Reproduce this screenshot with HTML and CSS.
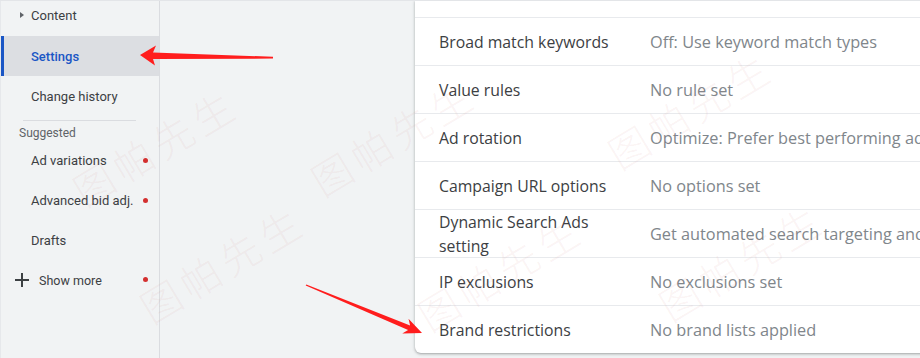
FILE: index.html
```html
<!DOCTYPE html>
<html>
<head>
<meta charset="utf-8">
<link rel="stylesheet" href="styles.css">
</head>
<body>
<div class="page">
  <nav class="sidebar">
    <div class="nav-item nav-first"><span class="caret"></span><span class="nav-text">Content</span></div>
    <div class="nav-item selected"><span class="nav-text">Settings</span></div>
    <div class="nav-item"><span class="nav-text">Change history</span></div>
    <div class="divider"></div>
    <div class="section-title">Suggested</div>
    <div class="nav-item"><span class="nav-text">Ad variations</span><span class="dot"></span></div>
    <div class="nav-item"><span class="nav-text">Advanced bid adj.</span><span class="dot"></span></div>
    <div class="nav-item"><span class="nav-text">Drafts</span></div>
    <div class="nav-item show-more">
      <svg class="plus" width="16" height="16" viewBox="0 0 16 16"><path d="M8 1v14M1 8h14" stroke="#3c4043" stroke-width="2" fill="none"/></svg>
      <span class="nav-text">Show more</span><span class="dot"></span>
    </div>
  </nav>
  <main class="main">
    <div class="card">
      <div class="row row-top"></div>
      <div class="row"><div class="label">Broad match keywords</div><div class="value">Off: Use keyword match types</div></div>
      <div class="row"><div class="label">Value rules</div><div class="value">No rule set</div></div>
      <div class="row"><div class="label">Ad rotation</div><div class="value">Optimize: Prefer best performing ads</div></div>
      <div class="row"><div class="label">Campaign URL options</div><div class="value">No options set</div></div>
      <div class="row"><div class="label">Dynamic Search Ads setting</div><div class="value">Get automated search targeting and ad headlines</div></div>
      <div class="row"><div class="label">IP exclusions</div><div class="value">No exclusions set</div></div>
      <div class="row"><div class="label">Brand restrictions</div><div class="value">No brand lists applied</div></div>
    </div>
  </main>
  <div class="wm wm-a">图帕先生</div>
  <div class="wm wm-b">图帕先生</div>
  <div class="wm wm-c">图帕先生</div>
  <div class="wm wm-d">图帕先生</div>
  <div class="wm wm-e">图帕先生</div>
  <div class="wm wm-f">图帕先生</div>
  <svg class="arrows" width="920" height="358" viewBox="0 0 920 358">
    <polygon fill="#ff1d1d" points="140,54 156,44.5 153,51.5 273,55.8 273,57.6 153,58 155,64.5"/>
    <polygon fill="#ff1d1d" points="422,332 402.3,332.5 408.1,329 305.7,284.6 306.3,283.4 410.1,324.4 408.5,317.7"/>
  </svg>
</div>
</body>
</html>
```
FILE: styles.css
```css
* { box-sizing: border-box; }
html, body { margin: 0; padding: 0; }
body {
  background: #f1f3f4;
  font-family: Roboto, "Noto Sans", Arial, sans-serif;
  color: #3c4043;
  overflow: hidden;
}
.page {
  position: relative;
  display: flex;
  width: 920px;
  height: 358px;
  overflow: hidden;
  border-top: 1px solid #e3e5e8;
}
.sidebar {
  width: 160px;
  flex: none;
  border-right: 1px solid #dadce0;
  border-left: 1px solid #e6e8eb;
  display: flex;
  flex-direction: column;
  margin-top: -6px;
}
.nav-item {
  position: relative;
  height: 40px;
  display: flex;
  align-items: center;
  padding-left: 30px;
  font-size: 13px;
}
.nav-first { height: 41px; }
.caret {
  position: absolute;
  left: 19px;
  top: 17px;
  width: 0; height: 0;
  border-top: 3.5px solid transparent;
  border-bottom: 3.5px solid transparent;
  border-left: 4px solid #5f6368;
}
.selected {
  background: #dcdee2;
  color: #1a56c5;
  font-weight: 500;
  box-shadow: inset 3px 0 0 #1a56c5;
}
.divider {
  margin: 4px 23px 0 22px;
  border-top: 1px solid #dadce0;
}
.section-title {
  font-size: 12px;
  color: #5f6368;
  padding: 5px 0 0 18px;
  line-height: 14px;
  height: 19px;
}
.dot {
  position: absolute;
  left: 142px;
  top: 18px;
  width: 5px;
  height: 5px;
  border-radius: 50%;
  background: #d32f2f;
}
.show-more { padding-left: 13px; gap: 9px; }
.show-more .nav-text { font-size: 12.5px; color: #3c4043; }
.show-more .dot { top: 17px; }
.main {
  flex: 1;
  padding-left: 255px;
  overflow: hidden;
}
.card {
  width: 620px;
  background: #fff;
  border-radius: 0 0 6px 6px;
  box-shadow: 0 1px 2px rgba(60,64,67,.3), 0 1px 3px 1px rgba(60,64,67,.12);
}
.row {
  display: flex;
  align-items: center;
  height: 48px;
  border-top: 1px solid #e8eaed;
  padding-left: 24px;
}
.row-top { height: 16px; border-top: 0; }
.label {
  width: 211px;
  flex: none;
  padding-right: 24px;
  font-family: "Open Sans", Roboto, sans-serif;
  font-size: 15.8px;
  font-weight: 500;
  line-height: 24px;
  color: #3c4043;
}
.value {
  white-space: nowrap;
  font-family: "Open Sans", Roboto, sans-serif;
  font-size: 16.3px;
  color: #80868b;
}
.wm {
  position: absolute;
  font-family: "Noto Sans CJK SC", sans-serif;
  font-size: 40px;
  font-weight: 300;
  letter-spacing: 6px;
  color: rgba(200, 110, 110, 0.08);
  transform: translate(-50%, -50%) rotate(-31deg);
  white-space: nowrap;
  pointer-events: none;
}
.wm-a { left: 155px; top: 145px; }
.wm-b { left: 222px; top: 262px; }
.wm-c { left: 393px; top: 135px; }
.wm-d { left: 690px; top: 108px; }
.wm-e { left: 500px; top: 270px; }
.wm-f { left: 741px; top: 260px; }
.arrows {
  position: absolute;
  left: 0;
  top: 0;
  pointer-events: none;
}
```
